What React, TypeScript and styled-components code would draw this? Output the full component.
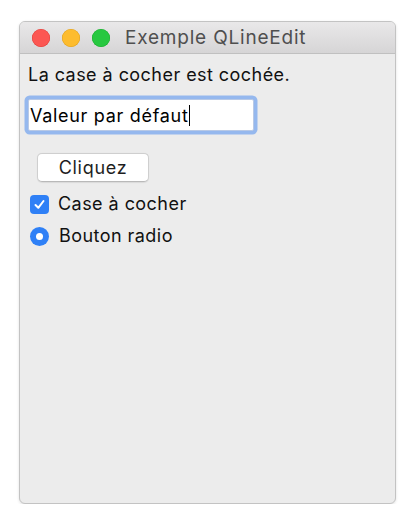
import React from "react";
import styled, { createGlobalStyle } from "styled-components";

const Global = createGlobalStyle`
  html, body { margin: 0; padding: 0; background: #ffffff; }
  body { font-family: Inter, "Liberation Sans", sans-serif; }
`;

const Page = styled.div`
  padding: 21px 0 0 19px;
`;

const Window = styled.div`
  width: 377px;
  height: 483px;
  box-sizing: border-box;
  border: 1px solid #c3c3c3;
  border-radius: 6px;
  background: #ececec;
  box-shadow: 0 1px 3px rgba(0, 0, 0, 0.12);
  overflow: hidden;
  display: flex;
  flex-direction: column;
`;

const TitleBar = styled.div`
  height: 32px;
  box-sizing: border-box;
  border-bottom: 1px solid #c0c0c0;
  background: linear-gradient(#e9e8e9, #d6d5d6);
  display: flex;
  align-items: center;
  padding-left: 12px;
`;

const Light = styled.span<{ $color: string; $edge: string }>`
  width: 18px;
  height: 18px;
  border-radius: 50%;
  background: ${(p) => p.$color};
  box-shadow: inset 0 0 0 0.5px ${(p) => p.$edge};
  margin-right: 12px;
  flex: none;
`;

const Title = styled.span`
  margin-left: 3px;
  font-size: 19px;
  color: #4f4f4f;
  letter-spacing: 0.8px;
`;

const Content = styled.div`
  display: flex;
  flex-direction: column;
  align-items: flex-start;
  padding: 9px 0 0 8px;
  font-size: 18px;
  letter-spacing: 0.45px;
  color: #111111;
`;

const Label = styled.div`
  line-height: 24px;
`;

const Field = styled.div`
  margin: 12px 0 0 0;
  width: 226px;
  height: 32px;
  box-sizing: border-box;
  background: #ffffff;
  border: 1px solid #b8c9e6;
  box-shadow: 0 0 0 3.5px #95b8ee;
  border-radius: 2px;
  display: flex;
  align-items: center;
  padding-left: 1px;
  color: #000000;
  font-size: 18px;
  letter-spacing: 0.7px;
`;

const Caret = styled.span`
  display: inline-block;
  width: 1px;
  height: 21px;
  background: #000;
`;

const Button = styled.div`
  margin: 22px 0 0 9px;
  width: 112px;
  height: 29px;
  box-sizing: border-box;
  background: #ffffff;
  border: 1px solid #cfcfcf;
  border-bottom-color: #b9b9b9;
  border-radius: 5px;
  box-shadow: 0 0.5px 1px rgba(0, 0, 0, 0.08);
  display: flex;
  align-items: center;
  justify-content: center;
  font-size: 18px;
  letter-spacing: 0.7px;
  color: #1e1e1e;
`;

const Row = styled.div<{ $gap: number; $top: number }>`
  display: flex;
  align-items: center;
  gap: ${(p) => p.$gap}px;
  margin: ${(p) => p.$top}px 0 0 2px;
  line-height: 24px;
`;

const Box = styled.span`
  width: 19px;
  height: 19px;
  border-radius: 4px;
  background: #2f80f6;
  display: flex;
  align-items: center;
  justify-content: center;
  flex: none;
`;

const Radio = styled.span`
  width: 19px;
  height: 19px;
  border-radius: 50%;
  background: #2f80f6;
  display: flex;
  align-items: center;
  justify-content: center;
  flex: none;
  &::after {
    content: "";
    width: 7px;
    height: 7px;
    border-radius: 50%;
    background: #fff;
  }
`;

export default function App() {
  return (
    <>
      <Global />
      <Page>
        <Window>
          <TitleBar>
            <Light $color="#fc5753" $edge="#df3d38" />
            <Light $color="#fdbc2e" $edge="#de9f1c" />
            <Light $color="#27c840" $edge="#1aab2b" />
            <Title>Exemple QLineEdit</Title>
          </TitleBar>
          <Content>
            <Label>La case à cocher est cochée.</Label>
            <Field>
              Valeur par défaut
              <Caret />
            </Field>
            <Button>Cliquez</Button>
            <Row $gap={9} $top={10}>
              <Box>
                <svg width="13" height="13" viewBox="0 0 13 13">
                  <path d="M2.5 7 L5.3 9.8 L10.5 3" fill="none" stroke="#fff" strokeWidth="2" strokeLinecap="round" strokeLinejoin="round" />
                </svg>
              </Box>
              Case à cocher
            </Row>
            <Row $gap={10} $top={8}>
              <Radio />
              Bouton radio
            </Row>
          </Content>
        </Window>
      </Page>
    </>
  );
}
